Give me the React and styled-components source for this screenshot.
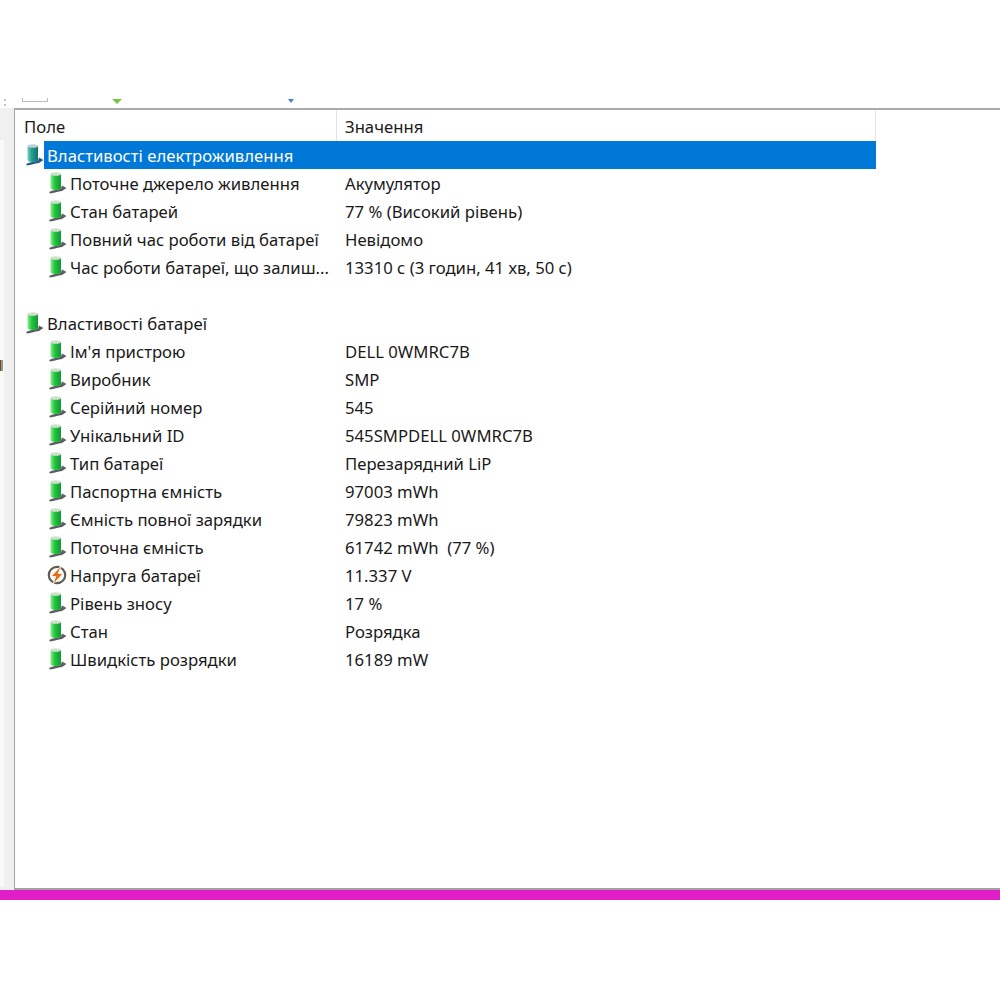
import React from 'react';
import styled, { createGlobalStyle } from 'styled-components';

const GlobalStyle = createGlobalStyle`
  html, body { margin: 0; padding: 0; background: #fff; }
  #root { width: 1000px; height: 1000px; overflow: hidden; }
`;

const batteryRows = [
  { name: 'Ім\'я пристрою', value: 'DELL 0WMRC7B' },
  { name: 'Виробник', value: 'SMP' },
  { name: 'Серійний номер', value: '545' },
  { name: 'Унікальний ID', value: '545SMPDELL 0WMRC7B' },
  { name: 'Тип батареї', value: 'Перезарядний LiP' },
  { name: 'Паспортна ємність', value: '97003 mWh' },
  { name: 'Ємність повної зарядки', value: '79823 mWh' },
  { name: 'Поточна ємність', value: '61742 mWh  (77 %)' },
  { name: 'Напруга батареї', value: '11.337 V', bolt: true },
  { name: 'Рівень зносу', value: '17 %' },
  { name: 'Стан', value: 'Розрядка' },
  { name: 'Швидкість розрядки', value: '16189 mW' },
];

const powerRows = [
  { name: 'Поточне джерело живлення', value: 'Акумулятор' },
  { name: 'Стан батарей', value: '77 % (Високий рівень)' },
  { name: 'Повний час роботи від батареї', value: 'Невідомо' },
  { name: 'Час роботи батареї, що залиш...', value: '13310 с (3 годин, 41 хв, 50 с)' },
];

const green = { id: 'g', from: '#8cec8c', mid: '#20c83c', to: '#14933a', cap: '#cfe0cf', base: '#5a5e61' };
const teal = { id: 't', from: '#74cfc0', mid: '#1f9f8e', to: '#176f6c', cap: '#bcd2d4', base: '#2b5c88' };

function BatteryIcon({ tone = green }) {
  const fill = `batt-${tone.id}`;
  return (
    <svg width="20" height="24" viewBox="0 0 20 24">
      <defs>
        <linearGradient id={fill} x1="0" x2="1" y1="0" y2="0">
          <stop offset="0" stopColor={tone.from} />
          <stop offset="0.4" stopColor={tone.mid} />
          <stop offset="1" stopColor={tone.to} />
        </linearGradient>
      </defs>
      <path d="M2 21 C6 18.5 10 19.5 14 17.5 L15 14.5 L19.5 17 L15 20 C11 20 7 22.5 3 22.5 Z" fill={tone.base} />
      <path d="M3.5 3 V17 C3.5 19.5 14 19.5 14 17 V3 Z" fill={`url(#${fill})`} />
      <ellipse cx="8.75" cy="3" rx="5.25" ry="1.8" fill={tone.cap} />
    </svg>
  );
}

function BoltIcon() {
  return (
    <svg width="20" height="20" viewBox="0 0 20 20">
      <circle cx="10" cy="10" r="8.2" fill="#fff" stroke="#5f5b56" strokeWidth="2.2" />
      <path d="M15 0 L4 11.5 L8.8 11.5 L5.5 20 L16 8.5 L11 8.5 Z" fill="#e66c12" stroke="#fff" strokeWidth="0.8" />
    </svg>
  );
}

function GroupRow({ label, selected, tone }) {
  return (
    <Row>
      <GroupIcon><BatteryIcon tone={tone} /></GroupIcon>
      <GroupLabel $selected={selected}>{label}</GroupLabel>
    </Row>
  );
}

function ItemRow({ name, value, bolt }) {
  return (
    <Row>
      <ItemIcon>{bolt ? <BoltIcon /> : <BatteryIcon />}</ItemIcon>
      <ItemName>{name}</ItemName>
      <Value>{value}</Value>
    </Row>
  );
}

export default function App() {
  return (
    <Page>
      <GlobalStyle />
      <Toolbar>
        <Grip />
        <ToolButton />
        <GreenArrow />
        <BlueArrow />
      </Toolbar>
      <Body>
        <Sidebar>
          <SidebarTree>
            <SidebarMark />
          </SidebarTree>
        </Sidebar>
        <ListPane>
          <ListInner>
            <Header>
              <HeaderCell $w={322}>Поле</HeaderCell>
              <HeaderCell>Значення</HeaderCell>
            </Header>
            <GroupRow label="Властивості електроживлення" selected tone={teal} />
            {powerRows.map((r) => <ItemRow key={r.name} {...r} />)}
            <Row />
            <GroupRow label="Властивості батареї" />
            {batteryRows.map((r) => <ItemRow key={r.name} {...r} />)}
          </ListInner>
        </ListPane>
      </Body>
      <TaskStrip />
    </Page>
  );
}

const Page = styled.div`
  width: 1000px;
  height: 1000px;
  padding-top: 90px;
  box-sizing: border-box;
  background: #fff;
  font-family: "Noto Sans", "Open Sans", sans-serif;
  color: #1a1a1a;
`;

const Toolbar = styled.div`
  height: 18px;
  position: relative;
`;

const Grip = styled.div`
  position: absolute;
  left: 4px;
  top: 9px;
  width: 2px;
  height: 7px;
  border-left: 2px dotted #c4c4c4;
`;

const ToolButton = styled.div`
  position: absolute;
  left: 22px;
  top: 8px;
  width: 24px;
  height: 3px;
  border: 1px solid #bdbdbd;
  border-top: 0;
`;

const GreenArrow = styled.div`
  position: absolute;
  left: 112px;
  top: 9px;
  border-left: 5px solid transparent;
  border-right: 5px solid transparent;
  border-top: 5px solid #74c63f;
`;

const BlueArrow = styled.div`
  position: absolute;
  left: 288px;
  top: 9px;
  border-left: 3px solid transparent;
  border-right: 3px solid transparent;
  border-top: 4px solid #3f87cf;
`;

const Body = styled.div`
  display: flex;
  height: 782px;
`;

const Sidebar = styled.div`
  width: 14px;
  flex: none;
  padding: 32px 10px 3px 0;
  box-sizing: border-box;
  background: #f0f0f0;
`;

const SidebarTree = styled.div`
  width: 4px;
  height: 100%;
  background: #f9f9f9;
  position: relative;
`;

const SidebarMark = styled.div`
  position: absolute;
  left: 0;
  top: 220px;
  width: 3px;
  height: 11px;
  background: linear-gradient(90deg, #55504a 0 1px, #c98a4a 1px 2px, #6f9bc8 2px);
`;

const ListPane = styled.div`
  flex: 1;
  border-top: 2px solid #a9abad;
  border-left: 1px solid #a0a4a8;
  border-bottom: 2px solid #a0a0a4;
  background: #fff;
`;

const ListInner = styled.div`
  width: 861px;
`;

const Header = styled.div`
  display: flex;
  height: 31px;
  align-items: center;
  border-right: 1px solid #e4e4e4;
`;

const HeaderCell = styled.div`
  box-sizing: border-box;
  height: 100%;
  display: flex;
  align-items: center;
  padding-top: 2px;
  padding-left: ${(p) => (p.$w ? '9px' : '8px')};
  font-size: 16.7px;
  width: ${(p) => (p.$w ? `${p.$w}px` : 'auto')};
  border-right: ${(p) => (p.$w ? '1px solid #e4e4e4' : '0')};
`;

const Row = styled.div`
  display: flex;
  align-items: center;
  height: 28px;
  font-size: 16.7px;
  white-space: pre;
`;

const GroupIcon = styled.div`
  width: 20px;
  margin-left: 9px;
  flex: none;
  display: flex;
`;

const GroupLabel = styled.div`
  flex: 1;
  height: 100%;
  box-sizing: border-box;
  display: flex;
  align-items: center;
  padding-left: 3px;
  background: ${(p) => (p.$selected ? '#0078d7' : 'transparent')};
  color: ${(p) => (p.$selected ? '#fff' : 'inherit')};
`;

const ItemIcon = styled.div`
  width: 20px;
  margin-left: 32px;
  flex: none;
  display: flex;
`;

const ItemName = styled.div`
  width: 278px;
  flex: none;
  padding-left: 3px;
  box-sizing: border-box;
`;

const Value = styled.div`
  flex: 1;
`;

const TaskStrip = styled.div`
  height: 10px;
  background: #e01fc8;
`;
